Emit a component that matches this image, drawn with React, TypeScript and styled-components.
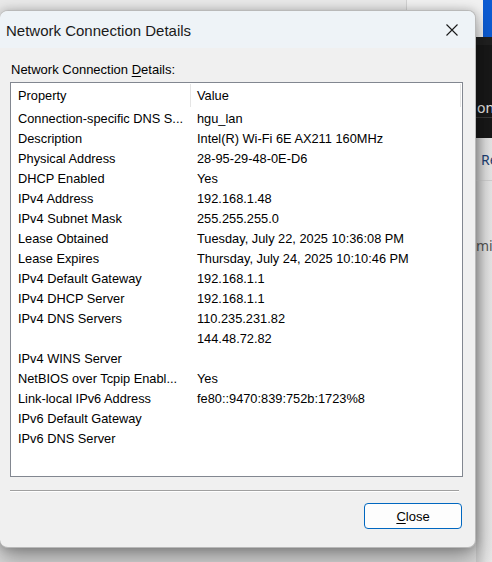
import React from 'react';
import styled, { createGlobalStyle } from 'styled-components';

const Global = createGlobalStyle`
  html, body { margin: 0; padding: 0; }
  body {
    width: 492px;
    height: 562px;
    overflow: hidden;
    background: #e4e4e4;
    font-family: "Liberation Sans", Arial, sans-serif;
    color: #000;
  }
`;

const Desktop = styled.div`
  position: relative;
  width: 492px;
  height: 562px;
  overflow: hidden;
  background: #dcdcdc;
`;

const TopStrip = styled.div`
  position: absolute;
  left: 0;
  top: 0;
  width: 483px;
  height: 37px;
  display: grid;
  grid-template-columns: 406px 1px 1fr;
  background: #ebebeb;
`;

const StripPane = styled.div<{ $tone: string }>`
  background: ${(p) => p.$tone};
`;

const BlueTab = styled.div`
  position: absolute;
  left: 483px;
  top: 0;
  width: 9px;
  height: 37px;
  background: #0c5bd2;
`;

const SidePanel = styled.div`
  position: absolute;
  left: 476px;
  top: 37px;
  width: 16px;
  bottom: 0;
  display: flex;
  flex-direction: column;
  overflow: hidden;
`;

const DarkBlock = styled.div`
  height: 101px;
  box-sizing: border-box;
  flex: none;
  background: #181818;
  display: flex;
  flex-direction: column;
  border-top: 8px solid #202020;
`;

const DarkLine = styled.div`
  height: 1px;
  background: #3a3a3a;
`;

const SideText = styled.div<{ $color: string; $pad: number; $h: number }>`
  height: ${(p) => p.$h}px;
  flex: none;
  display: flex;
  align-items: center;
  padding-left: ${(p) => p.$pad}px;
  font-family: "Noto Sans", "Liberation Sans", sans-serif;
  font-size: 14px;
  color: ${(p) => p.$color};
  white-space: nowrap;
`;

const LightBlock = styled.div`
  flex: 1;
  background: linear-gradient(to right, #c9c9c9 0px, #e2e2e2 10px, #e8e8e8 16px);
  display: flex;
  flex-direction: column;
`;

const LightLine = styled.div`
  height: 1px;
  background: #d0d0d0;
`;

const Dialog = styled.div`
  position: absolute;
  left: 0;
  top: 10px;
  width: 476px;
  height: 538px;
  box-sizing: border-box;
  border: 1px solid #b9b9b9;
  border-left: none;
  border-radius: 8px;
  overflow: hidden;
  display: flex;
  flex-direction: column;
  box-shadow: 0 10px 22px rgba(0, 0, 0, 0.38), 0 0 8px rgba(0, 0, 0, 0.18);
  background: #f0f0f0;
`;

const TitleBar = styled.div`
  height: 37px;
  flex: none;
  display: flex;
  align-items: center;
  justify-content: space-between;
  background: #eef3f7;
  padding-left: 6px;
`;

const TitleText = styled.div`
  font-size: 15px;
  color: #1a1a1a;
  padding-top: 2px;
`;

const CloseGlyph = styled.div`
  width: 46px;
  height: 37px;
  display: flex;
  align-items: center;
  justify-content: center;
`;

const Body = styled.div`
  flex: 1;
  display: flex;
  flex-direction: column;
  padding: 14px 13px 0 10px;
`;

const Label = styled.div`
  font-size: 13px;
  line-height: 16px;
  padding-left: 1px;
  margin-bottom: 4px;
  color: #000;
`;

const Key = styled.span`
  text-decoration: underline;
  text-underline-offset: 2px;
`;

const ListBox = styled.div`
  width: 453px;
  height: 395px;
  box-sizing: border-box;
  border: 1px solid #828790;
  background: #fff;
  display: flex;
  flex-direction: column;
`;

const HeaderRow = styled.div`
  height: 25px;
  display: grid;
  grid-template-columns: 180px 270px 1fr;
  flex: none;
`;

const HeaderCell = styled.div<{ $pad: number }>`
  display: flex;
  align-items: center;
  padding-left: ${(p) => p.$pad}px;
  font-size: 12.8px;
  border-right: 1px solid #e5e5e5;
  margin: 1px 0 1px 0;
`;

const Rows = styled.div`
  display: grid;
  grid-template-columns: 179px 1fr;
  grid-auto-rows: 20px;
`;

const Cell = styled.div<{ $pad: number }>`
  display: flex;
  align-items: center;
  padding-left: ${(p) => p.$pad}px;
  font-size: 12.8px;
  white-space: nowrap;
  overflow: hidden;
`;

const Separator = styled.div`
  margin-top: 13px;
  width: 449px;
  height: 1px;
  background: #a0a0a0;
  box-shadow: 0 1px 0 #ffffff;
`;

const Footer = styled.div`
  display: flex;
  justify-content: flex-end;
  margin-top: 12px;
`;

const Button = styled.button`
  width: 98px;
  height: 26px;
  box-sizing: border-box;
  border: 1px solid #0067c0;
  border-radius: 4px;
  background: #fdfdfd;
  font-family: "Liberation Sans", Arial, sans-serif;
  font-size: 13px;
  color: #000;
  padding: 0;
`;

const rows: [string, string][] = [
  ['Connection-specific DNS S...', 'hgu_lan'],
  ['Description', 'Intel(R) Wi-Fi 6E AX211 160MHz'],
  ['Physical Address', '28-95-29-48-0E-D6'],
  ['DHCP Enabled', 'Yes'],
  ['IPv4 Address', '192.168.1.48'],
  ['IPv4 Subnet Mask', '255.255.255.0'],
  ['Lease Obtained', 'Tuesday, July 22, 2025 10:36:08 PM'],
  ['Lease Expires', 'Thursday, July 24, 2025 10:10:46 PM'],
  ['IPv4 Default Gateway', '192.168.1.1'],
  ['IPv4 DHCP Server', '192.168.1.1'],
  ['IPv4 DNS Servers', '110.235.231.82'],
  ['', '144.48.72.82'],
  ['IPv4 WINS Server', ''],
  ['NetBIOS over Tcpip Enabl...', 'Yes'],
  ['Link-local IPv6 Address', 'fe80::9470:839:752b:1723%8'],
  ['IPv6 Default Gateway', ''],
  ['IPv6 DNS Server', ''],
];

export default function App() {
  return (
    <>
      <Global />
      <Desktop>
        <TopStrip>
          <StripPane $tone="#e9e9e9" />
          <StripPane $tone="#d2d2d2" />
          <StripPane $tone="#f1f1f1" />
        </TopStrip>
        <BlueTab />
        <SidePanel>
          <DarkBlock>
            <SideText $color="#181818" $pad={0} $h={52} />
            <SideText $color="#e8e8e8" $pad={1} $h={20}>on</SideText>
            <DarkLine />
          </DarkBlock>
          <LightBlock>
            <SideText $color="#1d3f74" $pad={5} $h={42}>Re</SideText>
            <LightLine />
            <SideText $color="#555" $pad={0} $h={128}>mi</SideText>
          </LightBlock>
        </SidePanel>
        <Dialog>
          <TitleBar>
            <TitleText>Network Connection Details</TitleText>
            <CloseGlyph>
              <svg width="12" height="12" viewBox="0 0 12 12">
                <path d="M0.5 0.5 L11.5 11.5 M11.5 0.5 L0.5 11.5" stroke="#1a1a1a" strokeWidth="1.1" fill="none" />
              </svg>
            </CloseGlyph>
          </TitleBar>
          <Body>
            <Label>
              Network Connection <Key>D</Key>etails:
            </Label>
            <ListBox>
              <HeaderRow>
                <HeaderCell $pad={7}>Property</HeaderCell>
                <HeaderCell $pad={6}>Value</HeaderCell>
              </HeaderRow>
              <Rows>
                {rows.map(([k, v], i) => (
                  <React.Fragment key={i}>
                    <Cell $pad={7}>{k}</Cell>
                    <Cell $pad={7}>{v}</Cell>
                  </React.Fragment>
                ))}
              </Rows>
            </ListBox>
            <Separator />
            <Footer>
              <Button>
                <Key>C</Key>lose
              </Button>
            </Footer>
          </Body>
        </Dialog>
      </Desktop>
    </>
  );
}
